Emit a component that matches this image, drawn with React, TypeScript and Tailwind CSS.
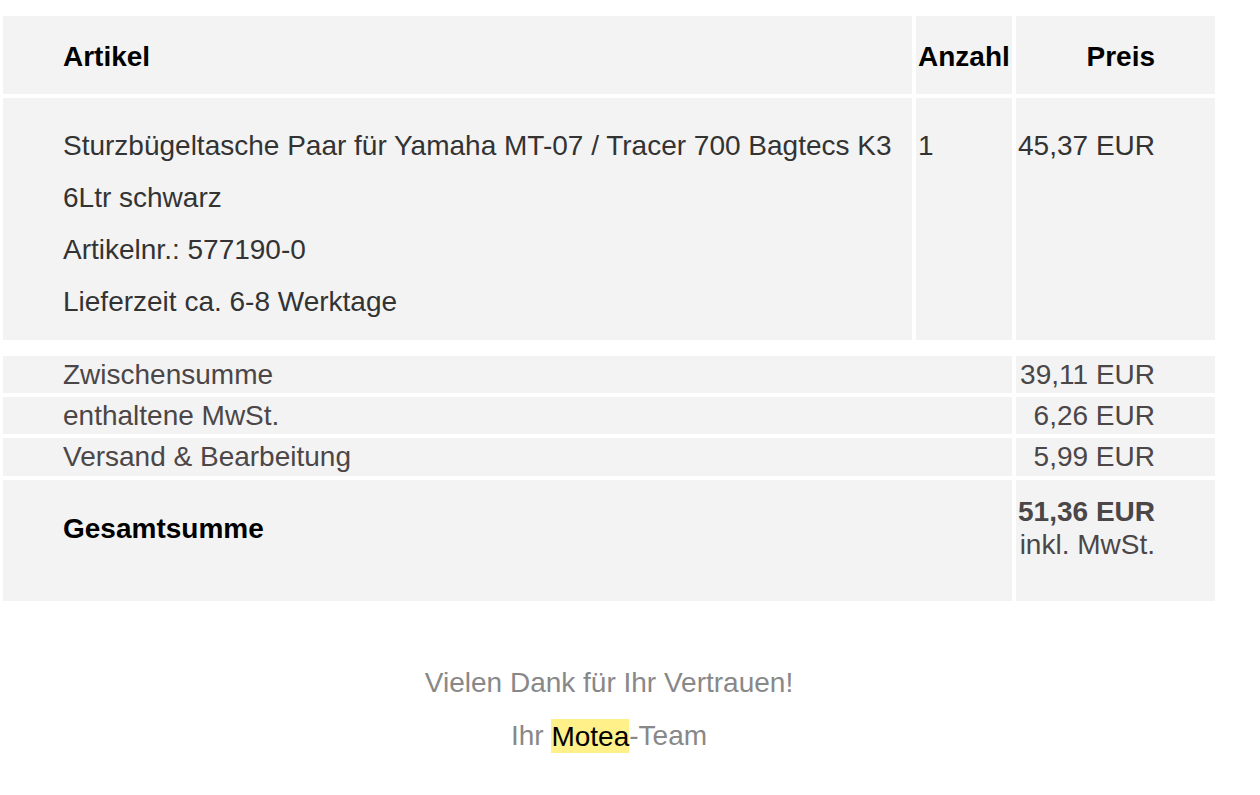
import React from "react";

export default function App() {
  return (
    <div className="min-h-[795px] w-[1260px] bg-white font-['Liberation_Sans',Arial,sans-serif] text-[28px]">
      <div className="ml-[3px] w-[1212px] pt-[16px]">
        {/* Items table */}
        <div className="grid grid-cols-[909px_96px_199px] gap-[4px]">
          <div className="h-[78px] bg-[#f3f3f3] pl-[60px] pt-[25px] font-bold leading-[32px] text-black">
            Artikel
          </div>
          <div className="h-[78px] bg-[#f3f3f3] pl-[2px] pt-[25px] font-bold leading-[32px] text-black">
            Anzahl
          </div>
          <div className="h-[78px] bg-[#f3f3f3] pr-[60px] pt-[25px] text-right font-bold leading-[32px] text-black">
            Preis
          </div>

          <div className="bg-[#f3f3f3] pb-[12px] pl-[60px] pt-[22px] leading-[52px] text-[#333333]">
            <div>Sturzbügeltasche Paar für Yamaha MT-07 / Tracer 700 Bagtecs K3 6Ltr schwarz</div>
            <div>Artikelnr.: 577190-0</div>
            <div>Lieferzeit ca. 6-8 Werktage</div>
          </div>
          <div className="bg-[#f3f3f3] pl-[2px] pt-[22px] leading-[52px] text-[#333333]">1</div>
          <div className="bg-[#f3f3f3] pr-[60px] pt-[22px] text-right leading-[52px] text-[#333333]">
            45,37 EUR
          </div>
        </div>

        {/* Summary table */}
        <div className="mt-[16px] grid grid-cols-[1009px_199px] gap-[4px] text-[#4b4647]">
          <div className="h-[37px] bg-[#f3f3f3] pl-[60px] pt-[1px] leading-[36px]">Zwischensumme</div>
          <div className="h-[37px] bg-[#f3f3f3] pr-[60px] pt-[1px] text-right leading-[36px]">39,11 EUR</div>

          <div className="h-[37px] bg-[#f3f3f3] pl-[60px] pt-[1px] leading-[36px]">enthaltene MwSt.</div>
          <div className="h-[37px] bg-[#f3f3f3] pr-[60px] pt-[1px] text-right leading-[36px]">6,26 EUR</div>

          <div className="h-[38px] bg-[#f3f3f3] pl-[60px] pt-[1px] leading-[36px]">Versand &amp; Bearbeitung</div>
          <div className="h-[38px] bg-[#f3f3f3] pr-[60px] pt-[1px] text-right leading-[36px]">5,99 EUR</div>

          <div className="h-[121px] bg-[#f3f3f3] pl-[60px] pt-[33px] font-bold leading-[32px] text-black">
            Gesamtsumme
          </div>
          <div className="h-[121px] bg-[#f3f3f3] pr-[60px] pt-[15px] text-right leading-[33px]">
            <div className="font-bold">51,36 EUR</div>
            <div>inkl. MwSt.</div>
          </div>
        </div>

        {/* Footer */}
        <div className="mt-[56px] text-center text-[#888888]">
          <div className="leading-[52px]">Vielen Dank für Ihr Vertrauen!</div>
          <div className="pt-[1px] leading-[52px]">
            Ihr <span className="bg-[#fff08a] py-[1.5px] text-black">Motea</span>-Team
          </div>
        </div>
      </div>
    </div>
  );
}
